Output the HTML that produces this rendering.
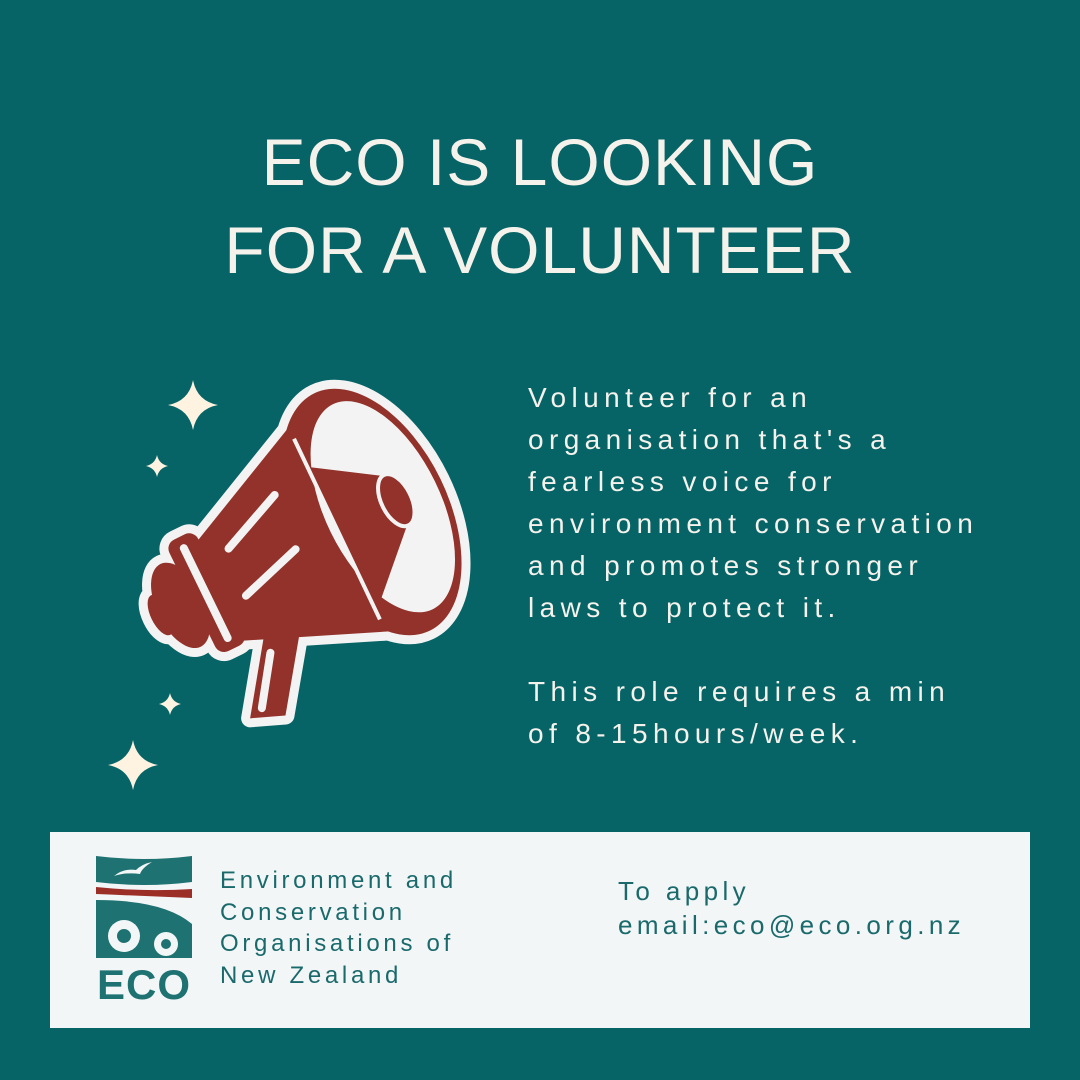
<!DOCTYPE html>
<html><head><meta charset="utf-8"><style>
body{margin:0;width:1080px;height:1080px;background:#066467;position:relative;overflow:hidden;font-family:"Liberation Sans",sans-serif}
.title{position:absolute;left:0;width:1080px;top:118px;text-align:center;color:#f5f2ec;font-size:66px;line-height:88px;letter-spacing:1px}
.body{position:absolute;left:528px;top:377px;color:#f5f2ec;font-size:28px;line-height:42px;letter-spacing:5.4px;white-space:nowrap}
.panel{position:absolute;left:50px;top:832px;width:980px;height:196px;background:#f3f6f7}
.org{position:absolute;left:170px;top:33px;color:#1a6a6c;font-size:24px;line-height:31.5px;letter-spacing:3.7px;white-space:nowrap}
.apply{position:absolute;left:568px;top:42px;color:#1a6a6c;font-size:26px;line-height:34px;letter-spacing:4.4px;white-space:nowrap}
</style></head><body>
<div class="title">ECO IS LOOKING<br>FOR A VOLUNTEER</div>
<svg width="1080" height="1080" style="position:absolute;left:0;top:0">
<g fill="#fdf3e0">
<path d="M193 380 Q197 401 218 405 Q197 409 193 430 Q189 409 168 405 Q189 401 193 380Z"/>
<path d="M157 455 Q159 464 168 466 Q159 468 157 477 Q155 468 146 466 Q155 464 157 455Z"/>
<path d="M170 693 Q172 702 181 704 Q172 706 170 715 Q168 706 159 704 Q168 702 170 693Z"/>
<path d="M133 740 Q137 761 158 765 Q137 769 133 790 Q129 769 108 765 Q129 761 133 740Z"/>
</g>
<g transform="translate(372,512) rotate(-26)">
<g fill="#f3f3f3" stroke="#f3f3f3" stroke-width="18" stroke-linejoin="round">
<path d="M-5,-128 L-175,-48 L-175,58 L-5,128 Z"/>
<ellipse cx="0" cy="0" rx="76" ry="132"/>
<rect x="-200" y="-62" width="32" height="124" rx="10"/>
<ellipse cx="-213" cy="0" rx="24" ry="46"/>
<ellipse cx="-235" cy="0" rx="10" ry="22"/>
<path d="M-145,55 L-113,70 L-167,145 L-200,132 Z"/>
</g>
<g fill="#92322a">
<path d="M-5,-128 L-175,-48 L-175,58 L-5,128 Z"/>
<ellipse cx="0" cy="0" rx="76" ry="132"/>
<rect x="-200" y="-62" width="32" height="124" rx="10"/>
<ellipse cx="-213" cy="0" rx="24" ry="46"/>
<ellipse cx="-235" cy="0" rx="10" ry="22"/>
<path d="M-145,55 L-113,70 L-167,145 L-200,132 Z"/>
</g>
<ellipse cx="12" cy="0" rx="58" ry="114" fill="#f3f3f3"/>
<path d="M-40,-70 L25,-28 L25,28 L-40,92 Z" fill="#92322a"/>
<ellipse cx="27" cy="0" rx="15" ry="28" fill="#92322a" stroke="#f3f3f3" stroke-width="4"/>
<path d="M-38,-100 L-40,100" stroke="#f3f3f3" stroke-width="4" fill="none"/>
<g stroke="#f3f3f3" stroke-width="8" stroke-linecap="round" fill="none">
<path d="M-145,-30 L-80,-58"/><path d="M-150,20 L-85,0"/><path d="M-185,-50 L-185,50"/>
<path d="M-153,82 L-185,128"/>
</g>
</g>
</svg>
<div class="body">Volunteer for an<br>organisation that's a<br>fearless voice for<br>environment conservation<br>and promotes stronger<br>laws to protect it.<br><br>This role requires a min<br>of 8-15hours/week.</div>
<div class="panel">
<svg width="110" height="180" style="position:absolute;left:44px;top:22px" viewBox="0 0 110 180">
<path d="M2,2 Q50,8 98,2 L98,28 Q50,34 2,28 Z" fill="#1f7272"/>
<path d="M20,22 Q30,14 42,16 Q48,10 58,8 Q48,14 46,20 Q32,18 20,22Z" fill="#f3f6f7"/>
<path d="M2,33 Q50,38 98,35 L98,44 Q50,42 2,40 Z" fill="#9b2f28"/>
<path d="M2,46 Q70,46 98,70 L98,104 L2,104 Z" fill="#1f7272"/>
<circle cx="30" cy="82" r="16" fill="#f3f6f7"/><circle cx="30" cy="82" r="7" fill="#1f7272"/>
<circle cx="72" cy="90" r="12" fill="#f3f6f7"/><circle cx="72" cy="90" r="5" fill="#1f7272"/>
<text x="50" y="145" text-anchor="middle" font-family="Liberation Sans" font-weight="bold" font-size="42" fill="#1f7272" letter-spacing="1">ECO</text>
</svg>
<div class="org">Environment and<br>Conservation<br>Organisations of<br>New Zealand</div>
<div class="apply">To apply<br>email:eco@eco.org.nz</div>
</div>
</body></html>
